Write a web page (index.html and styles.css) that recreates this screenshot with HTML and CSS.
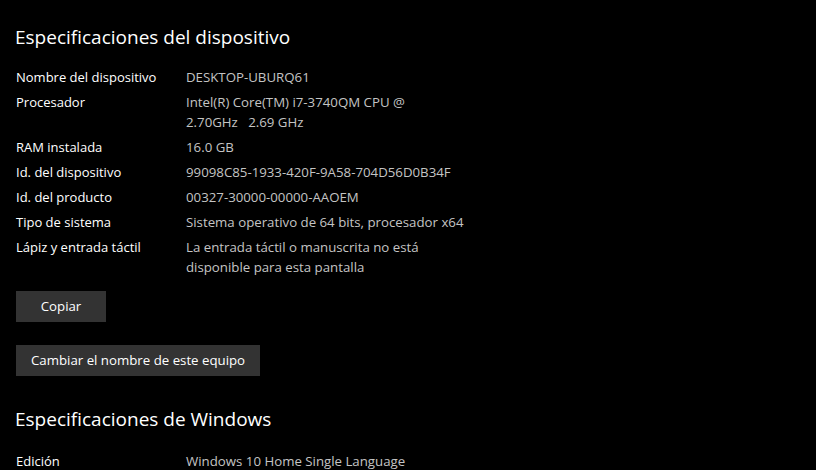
FILE: index.html
```html
<!doctype html>
<html>
<head>
<meta charset="UTF-8">
<title>Acerca de</title>
<link rel="stylesheet" href="styles.css">
</head>
<body>
<div class="page">
  <h2 class="title">Especificaciones del dispositivo</h2>
  <div class="specs">
    <div class="row"><div class="label">Nombre del dispositivo</div><div class="value">DESKTOP-UBURQ61</div></div>
    <div class="row"><div class="label">Procesador</div><div class="value">Intel(R) Core(TM) i7-3740QM CPU @<br>2.70GHz&nbsp;&nbsp;&nbsp;2.69 GHz</div></div>
    <div class="row"><div class="label">RAM instalada</div><div class="value">16.0 GB</div></div>
    <div class="row"><div class="label">Id. del dispositivo</div><div class="value">99098C85-1933-420F-9A58-704D56D0B34F</div></div>
    <div class="row"><div class="label">Id. del producto</div><div class="value">00327-30000-00000-AAOEM</div></div>
    <div class="row"><div class="label">Tipo de sistema</div><div class="value">Sistema operativo de 64 bits, procesador x64</div></div>
    <div class="row"><div class="label">Lápiz y entrada táctil</div><div class="value">La entrada táctil o manuscrita no está<br>disponible para esta pantalla</div></div>
  </div>
  <div class="actions">
    <a class="btn btn-copy" href="#">Copiar</a>
    <a class="btn" href="#">Cambiar el nombre de este equipo</a>
  </div>
  <h2 class="title title-win">Especificaciones de Windows</h2>
  <div class="specs specs-win">
    <div class="row"><div class="label">Edición</div><div class="value">Windows 10 Home Single Language</div></div>
  </div>
</div>
</body>
</html>
```

FILE: styles.css
```css
html, body { background: #000; }
body { margin: 0; font-family: "Open Sans", "Noto Sans", sans-serif; color: #fff; }
.page { padding: 23px 16px 0 16px; }
.title { margin: 0 0 0 -1px; font-size: 19px; font-weight: 400; line-height: 28px; color: #fff; }
.specs { margin-top: 16px; display: flex; flex-direction: column; gap: 5px; }
.specs-win { margin-top: 18px; }
.row { display: flex; font-size: 13px; line-height: 20px; }
.label { width: 170px; color: #fff; }
.value { color: #c4c4c4; font-size: 13.25px; }
.actions { margin-top: 14px; display: flex; flex-direction: column; align-items: flex-start; gap: 23px; }
.btn { display: block; background: #333; color: #fff; text-decoration: none; font-size: 13.25px; line-height: 31px; height: 31px; padding: 0 15px; }
.btn-copy { width: 60px; text-align: center; }
.title-win { margin-top: 29px; }
```
